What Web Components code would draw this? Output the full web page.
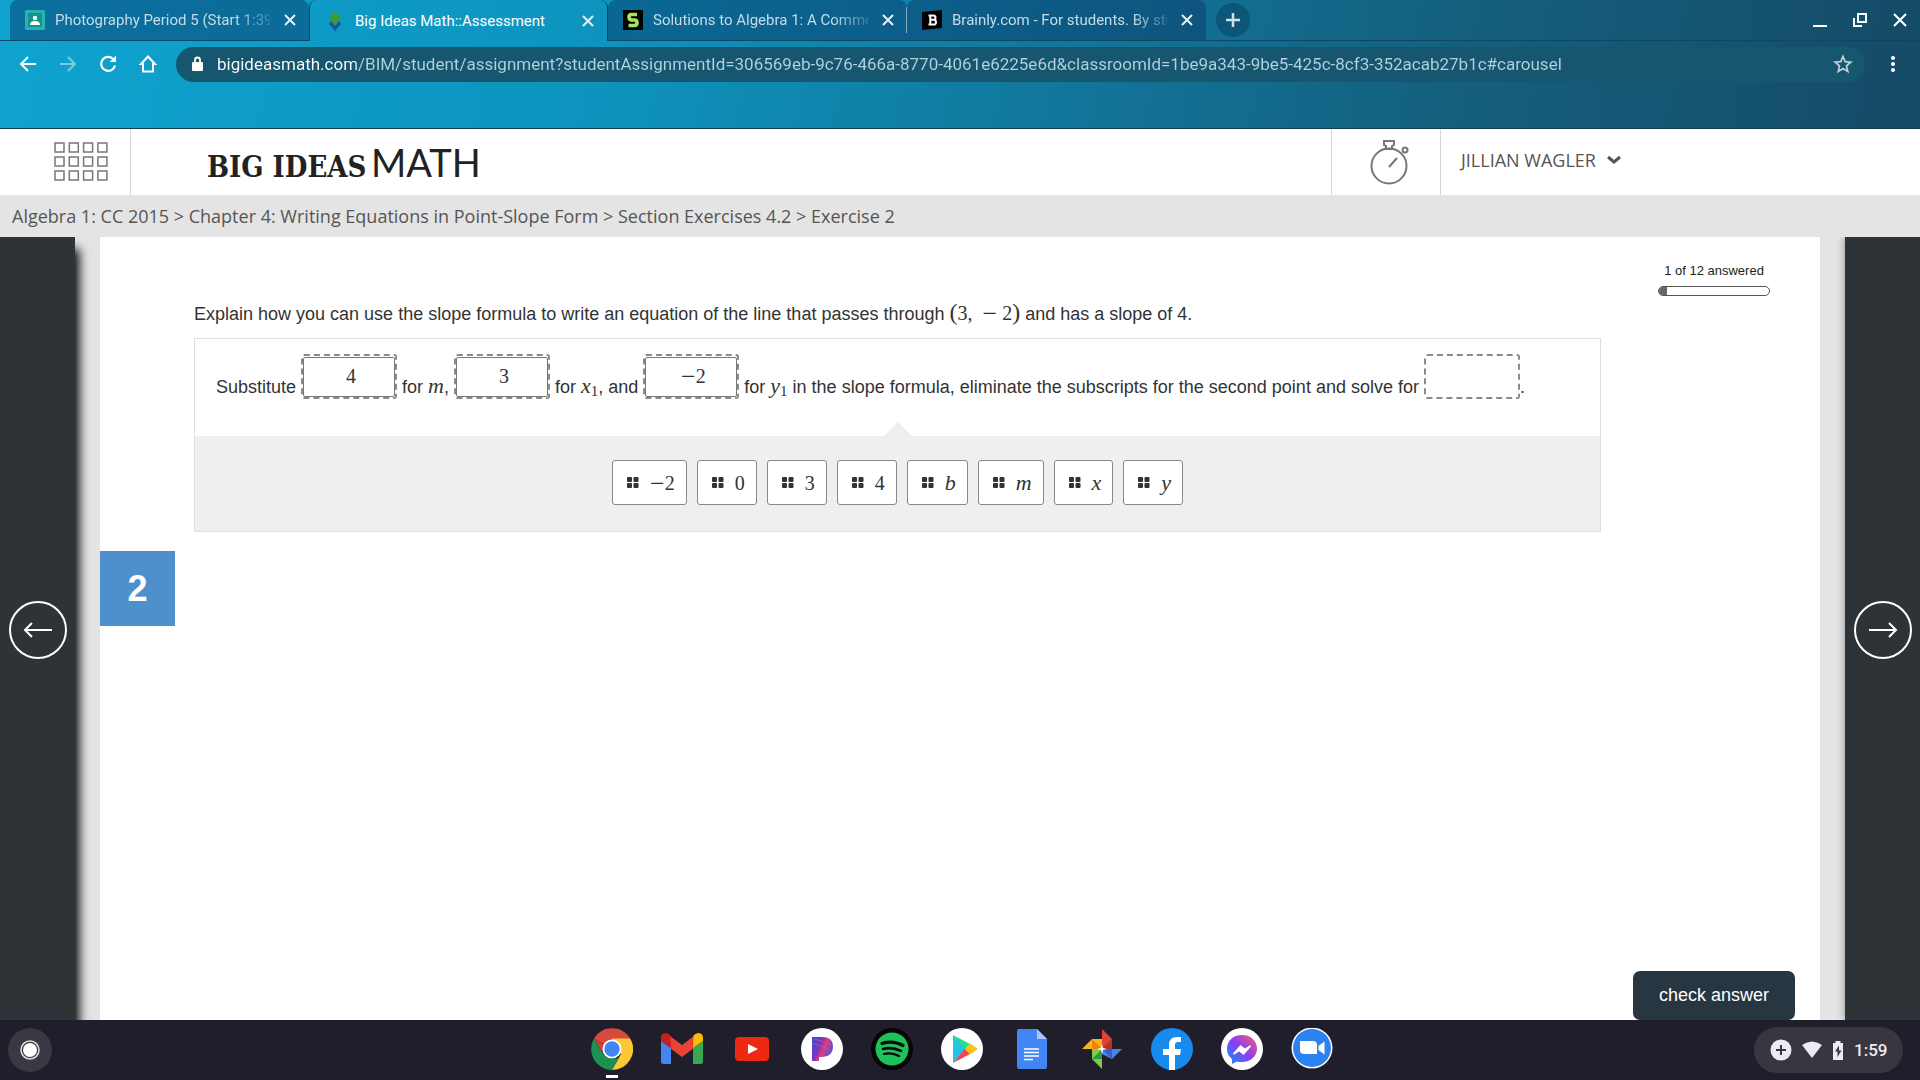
<!DOCTYPE html>
<html lang="en">
<head>
<meta charset="utf-8">
<title>Big Ideas Math::Assessment</title>
<style>
  * { box-sizing: border-box; }

  body {
    margin: 0;
    height: 100vh;
    display: flex;
    flex-direction: column;
    overflow: hidden;
    font-family: "Liberation Sans", Arial, sans-serif;
    color: #333;
    background: #e4e4e4;
  }
</style>
</head>
<body>
  <browser-frame>
    <browser-tab slot="tabs" faded label="Photography Period 5 (Start 1:39">
      <svg width="20" height="20" viewBox="0 0 20 20"><rect width="20" height="20" rx="1" fill="#25b5ae"/><rect x="3" y="3" width="14" height="14" fill="#12938d"/><circle cx="10" cy="8" r="2.2" fill="#fff"/><path d="M5 15q0-4 5-4t5 4z" fill="#fff"/></svg>
    </browser-tab>
    <browser-tab slot="tabs" active label="Big Ideas Math::Assessment">
      <svg width="20" height="20" viewBox="0 0 20 20"><path d="M10 5l6 8-6 7-6-7z" fill="#0f59a8"/><path d="M10 0l6 7-6 8-6-8z" fill="#3f9b35"/></svg>
    </browser-tab>
    <browser-tab slot="tabs" divided faded label="Solutions to Algebra 1: A Commo">
      <svg width="20" height="20" viewBox="0 0 20 20"><path fill="#000" d="M0 0h20v20H0z"/><path d="M14 4.500H8.500Q6 4.500 6 7t2.500 3h3Q14 10 14 12.700T11.500 15.500H5.500" fill="none" stroke="#a4e65a" stroke-width="3.600"/></svg>
    </browser-tab>
    <browser-tab slot="tabs" faded label="Brainly.com - For students. By stu">
      <svg width="20" height="20" viewBox="0 0 20 20"><path fill="#000" d="M0 2l20-2v18L0 20z"/><path d="M6.500 5.500h4.500q2.500 0 2.500 2.200T11 9.800H8.500h3q2.500 0 2.500 2.400t-2.500 2.400h-5M8.300 5.500v9" fill="none" stroke="#fff" stroke-width="2"/></svg>
    </browser-tab>
  </browser-frame>

  <app-header user="JILLIAN WAGLER"></app-header>
  <bread-crumb>Algebra 1: CC 2015 &gt; Chapter 4: Writing Equations in Point-Slope Form &gt; Section Exercises 4.2 &gt; Exercise 2</bread-crumb>

  <exercise-stage>
    <exercise-page number="2" total="12" answered="1">
      <span slot="prompt">Explain how you can use the slope formula to write an equation of the line that passes through <math-text><big>(</big>3, &nbsp;<b>−</b> 2<big>)</big></math-text> and has a slope of 4.</span>
      <span slot="work">Substitute <drop-slot><math-text>4</math-text></drop-slot> for <math-text><i>m</i></math-text>, <drop-slot><math-text>3</math-text></drop-slot> for <math-text><i>x</i><sub>1</sub></math-text>, and <drop-slot><math-text><b>−</b>2</math-text></drop-slot> for <math-text><i>y</i><sub>1</sub></math-text> in the slope formula, eliminate the subscripts for the second point and solve for <drop-slot empty></drop-slot>.</span>
      <drag-tile slot="tiles"><math-text><b>−</b>2</math-text></drag-tile>
      <drag-tile slot="tiles"><math-text>0</math-text></drag-tile>
      <drag-tile slot="tiles"><math-text>3</math-text></drag-tile>
      <drag-tile slot="tiles"><math-text>4</math-text></drag-tile>
      <drag-tile slot="tiles"><math-text><i>b</i></math-text></drag-tile>
      <drag-tile slot="tiles"><math-text><i>m</i></math-text></drag-tile>
      <drag-tile slot="tiles"><math-text><i>x</i></math-text></drag-tile>
      <drag-tile slot="tiles"><math-text><i>y</i></math-text></drag-tile>
    </exercise-page>
  </exercise-stage>

  <system-shelf time="1:59"></system-shelf>

<script>
const BASE = /* css */`
  * { box-sizing: border-box; }
  svg { display: block; flex: none; }
  button {
    margin: 0;
    padding: 0;
    border: 0;
    background: none;
    color: inherit;
    font: inherit;
    display: grid;
    place-items: center;
    cursor: pointer;
  }
`;

class BrowserFrame extends HTMLElement {
  constructor() {
    super();
    this.attachShadow({ mode: "open" });
  }

  static get styles() {
    return /* css */`
      ${BASE}
      :host {
        --line: #0c4663;
        display: block;
        font-family: Roboto, sans-serif;
        color: #fff;
        border-bottom: 1px solid #123c50;
        background: linear-gradient(100deg, #0fa3d0, #0d93bd 32%, #127397 58%, #14607f 75%, #154a66);
      }

      .strip {
        display: flex;
        height: 41px;
      }

      .lead { width: 10px; border-bottom: 1px solid var(--line); }

      .rest {
        flex: 1;
        display: flex;
        align-items: center;
        gap: 16px;
        padding: 0 8px 0 10px;
        border-bottom: 1px solid var(--line);
      }

      .add {
        width: 34px;
        height: 34px;
        border-radius: 50%;
        background: #0c5678;
        margin-right: auto;
      }

      .win { width: 24px; height: 34px; }

      .bar {
        display: flex;
        align-items: center;
        gap: 16px;
        height: 46px;
        padding: 0 15px 0 16px;
      }

      .bar button { width: 24px; height: 24px; }
      .off { opacity: .45; }

      .box {
        flex: 1;
        display: flex;
        align-items: center;
        height: 35px;
        border-radius: 18px;
        padding: 0 10px 0 15px;
        background: #17566f;
      }

      /* the host part of the address is brighter than its path */
      input {
        flex: 1;
        min-width: 0;
        margin: 0 0 0 12px;
        padding: 0;
        border: 0;
        outline: 0;
        font: 17px/24px Roboto, sans-serif;
        color: #b4d2de;
        background: linear-gradient(90deg, #fff 139px, #b4d2de 139px);
        -webkit-background-clip: text;
        background-clip: text;
        -webkit-text-fill-color: transparent;
      }

      .gap { height: 41px; }
    `;
  }

  connectedCallback() {
    this.render();
  }

  render() {
    this.shadowRoot.innerHTML = /* html */`
    <style>${BrowserFrame.styles}</style>
    <div class="strip">
      <div class="lead"></div>
      <slot name="tabs"></slot>
      <div class="rest">
        <button class="add" aria-label="New tab"><svg width="16" height="16" viewBox="0 0 16 16" stroke="#cfe0e8" stroke-width="2.500"><path d="M8 1v14M1 8h14"/></svg></button>
        <button class="win" aria-label="Minimize"><svg width="16" height="16" viewBox="0 0 16 16" stroke="#fff" stroke-width="2"><path d="M1 14h14"/></svg></button>
        <button class="win" aria-label="Restore"><svg width="16" height="16" viewBox="0 0 16 16" fill="none" stroke="#fff" stroke-width="2"><path d="M6 2h8v8H6zM2 6v8h8"/></svg></button>
        <button class="win" aria-label="Close"><svg width="16" height="16" viewBox="0 0 16 16" stroke="#fff" stroke-width="2"><path d="M2 2l12 12M14 2L2 14"/></svg></button>
      </div>
    </div>
    <div class="bar">
      <button aria-label="Back"><svg width="20" height="20" viewBox="0 0 20 20" fill="none" stroke="#fff" stroke-width="2"><path d="M18 10H3M10 3l-7 7 7 7"/></svg></button>
      <button class="off" aria-label="Forward"><svg width="20" height="20" viewBox="0 0 20 20" fill="none" stroke="#fff" stroke-width="2"><path d="M2 10h15M10 3l7 7-7 7"/></svg></button>
      <button aria-label="Reload"><svg width="20" height="20" viewBox="0 0 20 20" fill="none" stroke="#fff" stroke-width="2.200"><path d="M15.500 5.200A7 7 0 1 0 17 11.500"/><path d="M18 1.500v6.500h-6.500z" fill="#fff" stroke="none"/></svg></button>
      <button aria-label="Home"><svg width="20" height="20" viewBox="0 0 20 20" fill="none" stroke="#fff" stroke-width="2"><path d="M10 2.500l7 7.500h-2v7.500H5V10H3z"/></svg></button>
      <div class="box">
        <svg width="14" height="18" viewBox="0 0 14 18"><rect x="1" y="7" width="11" height="9" rx="1" fill="#fff"/><path d="M4 8V5a2.500 2.500 0 0 1 5 0v3" fill="none" stroke="#fff" stroke-width="1.800"/></svg>
        <input type="text" aria-label="Address" value="bigideasmath.com/BIM/student/assignment?studentAssignmentId=306569eb-9c76-466a-8770-4061e6225e6d&amp;classroomId=1be9a343-9be5-425c-8cf3-352acab27b1c#carousel">
        <button aria-label="Bookmark this page"><svg width="20" height="20" viewBox="0 0 20 20" fill="none" stroke="#c3d0d6" stroke-width="1.700"><path d="M10 2.500l2.200 5.200 5.600.5-4.300 3.700 1.300 5.500L10 14.500l-4.800 2.900 1.300-5.500-4.300-3.700 5.600-.5z"/></svg></button>
      </div>
      <button aria-label="Menu"><svg width="4" height="18" viewBox="0 0 4 18" fill="#fff"><circle cx="2" cy="3" r="2"/><circle cx="2" cy="9" r="2"/><circle cx="2" cy="15" r="2"/></svg></button>
    </div>
    <div class="gap"></div>`;
  }
}

class BrowserTab extends HTMLElement {
  constructor() {
    super();
    this.attachShadow({ mode: "open" });
  }

  static get styles() {
    return /* css */`
      ${BASE}
      :host {
        flex: 0 1 299px;
        min-width: 0;
        box-sizing: border-box;
        display: flex;
        align-items: center;
        gap: 10px;
        padding: 0 9px 0 15px;
        font-size: 15px;
        line-height: 24px;
        color: #c5dce6;
        border-bottom: 1px solid var(--line);
        border-radius: 8px 8px 0 0;
        background: rgb(8 60 108 / 50%);
      }

      :host([active]) {
        color: #fff;
        background: none;
        border: 1px solid var(--line);
        border-width: 0 1px;
      }

      /* short rule between two background tabs */
      :host([divided]) {
        background:
          linear-gradient(#7fa9bc, #7fa9bc) right 7px / 1px 26px no-repeat,
          rgb(8 60 108 / 50%);
      }

      .label {
        flex: 1;
        min-width: 0;
        white-space: nowrap;
      }

      :host([faded]) .label {
        -webkit-mask: linear-gradient(to left, #0003, #000 36px);
        mask: linear-gradient(to left, #0003, #000 36px);
      }

      button { width: 20px; height: 20px; }
    `;
  }

  connectedCallback() {
    this.render();
  }

  render() {
    this.shadowRoot.innerHTML = /* html */`
    <style>${BrowserTab.styles}</style>
    <slot></slot>
    <span class="label">${this.getAttribute("label")}</span>
    <button aria-label="Close tab"><svg width="12" height="12" viewBox="0 0 12 12" stroke="#e6f0f4" stroke-width="2"><path d="M1 1l10 10M11 1L1 11"/></svg></button>`;
  }
}

class AppHeader extends HTMLElement {
  constructor() {
    super();
    this.attachShadow({ mode: "open" });
  }

  static get styles() {
    return /* css */`
      ${BASE}
      :host {
        display: flex;
        height: 66px;
        background: #fff;
        color: #555;
      }

      .apps {
        width: 131px;
        padding-left: 31px;
        border-right: 1px solid #d6d6d6;
      }

      .logo {
        flex: 1;
        padding: 9px 0 0 76px;
        color: #222;
        line-height: 48px;
        white-space: nowrap;
      }

      .slab { font: bold 29px/48px "DejaVu Serif Condensed", "Liberation Serif", serif; }
      .light { font: 38px/48px Lato, sans-serif; }

      .timer {
        width: 110px;
        padding-left: 7px;
        border: 1px solid #d6d6d6;
        border-width: 0 1px;
      }

      .user {
        width: 479px;
        display: flex;
        align-items: center;
        justify-content: flex-start;
        gap: 10px;
        padding: 0 20px 4px;
        font: 18px/24px "Open Sans", sans-serif;
      }
    `;
  }

  connectedCallback() {
    this.render();
  }

  render() {
    let cells = "";
    for (let row = 0; row < 3; row++) {
      for (let col = 0; col < 4; col++) {
        cells += `<rect x="${1 + col * 14.3}" y="${1 + row * 14}" width="9" height="9"/>`;
      }
    }
    this.shadowRoot.innerHTML = /* html */`
    <style>${AppHeader.styles}</style>
    <button class="apps" aria-label="Menu"><svg width="54" height="40" viewBox="0 0 54 40" fill="none" stroke="#777" stroke-width="1.500">${cells}</svg></button>
    <div class="logo"><span class="slab">BIG IDEAS</span> <span class="light">MATH</span></div>
    <button class="timer" aria-label="Timer">
      <svg width="40" height="46" viewBox="0 0 40 46" fill="none" stroke="#777" stroke-width="2"><circle cx="19" cy="27" r="17.500"/><path d="M14 2h10v4l-2 1v3h-6V7l-2-1zM19 28l8-9"/><circle cx="35" cy="11" r="2.500"/></svg>
    </button>
    <button class="user">${this.getAttribute("user")}
      <svg width="16" height="10" viewBox="0 0 16 10" fill="none" stroke="#555" stroke-width="3"><path d="M2 2l6 5 6-5"/></svg>
    </button>`;
  }
}

class BreadCrumb extends HTMLElement {
  constructor() {
    super();
    this.attachShadow({ mode: "open" });
  }

  connectedCallback() {
    this.shadowRoot.innerHTML = /* html */`
    <style>
      :host {
        display: block;
        padding: 9px 12px;
        font: 18px/24px "Open Sans", sans-serif;
        color: #555;
        white-space: nowrap;
      }
    </style>
    <slot></slot>`;
  }
}

class ExerciseStage extends HTMLElement {
  constructor() {
    super();
    this.attachShadow({ mode: "open" });
  }

  static get styles() {
    return /* css */`
      ${BASE}
      :host {
        flex: 1;
        min-height: 0;
        display: flex;
        gap: 25px;
        overflow: hidden;
      }

      nav {
        width: 75px;
        flex: none;
        display: grid;
        place-items: center;
        padding: 2px 0 0 1px;
        background: #2d3337;
        box-shadow: 0 0 8px rgb(0 0 0 / 40%);
      }

      .prev { box-shadow: 4px 12px 10px #000; }
      ::slotted(*) { flex: 1; }
    `;
  }

  connectedCallback() {
    this.render();
  }

  arrow(path) {
    return `<svg width="60" height="60" viewBox="0 0 60 60" fill="none" stroke="#fff" stroke-width="2"><circle cx="30" cy="30" r="28"/><path d="${path}"/></svg>`;
  }

  render() {
    this.shadowRoot.innerHTML = /* html */`
    <style>${ExerciseStage.styles}</style>
    <nav class="prev"><button aria-label="Previous exercise">${this.arrow("M44 30H17M24 23l-7 7 7 7")}</button></nav>
    <slot></slot>
    <nav><button aria-label="Next exercise">${this.arrow("M16 30h27M36 23l7 7-7 7")}</button></nav>`;
  }
}

class ExercisePage extends HTMLElement {
  constructor() {
    super();
    this.attachShadow({ mode: "open" });
  }

  static get styles() {
    return /* css */`
      ${BASE}
      :host {
        display: grid;
        grid-template-columns: 75px 1fr 200px;
        column-gap: 19px;
        background: #fff;
        font-size: 18px;
        line-height: 30px;
      }

      .number {
        height: 75px;
        margin-top: 314px;
        display: grid;
        place-items: center;
        background: #4e90cc;
        color: #fff;
        font-size: 36px;
        font-weight: bold;
      }

      .body { padding-top: 62px; }
      .prompt { white-space: nowrap; }

      .card {
        margin-top: 9px;
        border: 1px solid #e0e0e0;
      }

      .work {
        padding: 15px 21px 0;
        height: 97px;
        white-space: nowrap;
      }

      .bank {
        position: relative;
        display: flex;
        justify-content: center;
        gap: 10px;
        padding: 24px 0 26px;
        background: #efefef;
      }

      .bank::before {
        content: "";
        position: absolute;
        bottom: 100%;
        left: 50%;
        border: 14px solid transparent;
        border-top: 0;
        border-bottom-color: #efefef;
        transform: translate(-50%, 0);
      }

      .side {
        display: flex;
        flex-direction: column;
        justify-content: space-between;
        padding-right: 25px;
      }

      .progress {
        align-self: flex-end;
        width: 112px;
        margin: 24px 25px 0 0;
        font-size: 13px;
        line-height: 20px;
        text-align: center;
        color: #222;
      }

      .track {
        height: 10px;
        margin-top: 5px;
        border: 1px solid #555;
        border-radius: 5px;
        overflow: hidden;
      }

      .fill {
        height: 100%;
        width: calc(100% / 14);
        background: #666;
      }

      .check {
        align-self: flex-end;
        width: 162px;
        height: 49px;
        padding-bottom: 2px;
        border-radius: 7px;
        background: #283642;
        color: #fff;
        font-size: 18px;
      }
    `;
  }

  connectedCallback() {
    this.render();
  }

  render() {
    const answered = this.getAttribute("answered");
    const total = this.getAttribute("total");
    this.shadowRoot.innerHTML = /* html */`
    <style>${ExercisePage.styles}</style>
    <div class="number">${this.getAttribute("number")}</div>
    <div class="body">
      <div class="prompt"><slot name="prompt"></slot></div>
      <div class="card">
        <div class="work"><slot name="work"></slot></div>
        <div class="bank"><slot name="tiles"></slot></div>
      </div>
    </div>
    <div class="side">
      <div class="progress">${answered} of ${total} answered
        <div class="track"><div class="fill"></div></div>
      </div>
      <button class="check">check answer</button>
    </div>`;
  }
}

class MathText extends HTMLElement {
  constructor() {
    super();
    this.attachShadow({ mode: "open" });
  }

  connectedCallback() {
    this.shadowRoot.innerHTML = /* html */`
    <style>
      :host {
        font-family: "Liberation Serif", serif;
        font-size: 20px;
        line-height: 20px;
      }
      ::slotted(i) { font-size: 22px; }
      ::slotted(b) { font-size: 26px; font-weight: normal; line-height: 0; vertical-align: -2px; }
      ::slotted(big) { font-size: 24px; }
      ::slotted(sub) { font-size: 15px; line-height: 0; vertical-align: -3px; }
    </style>
    <slot></slot>`;
  }
}

class DropSlot extends HTMLElement {
  constructor() {
    super();
    this.attachShadow({ mode: "open" });
  }

  connectedCallback() {
    this.shadowRoot.innerHTML = /* html */`
    <style>
      /* overflow keeps the box sitting on its bottom edge, filled or empty */
      :host {
        display: inline-block;
        box-sizing: border-box;
        width: 96px;
        height: 45px;
        padding: 1px 0 0;
        overflow: hidden;
        vertical-align: -6px;
        border: 2px dashed #8a8a8a;
        border-radius: 3px;
        text-align: center;
      }
      div {
        height: 40px;
        line-height: 38px;
        box-sizing: border-box;
        border: 1px solid #777;
        border-radius: 2px;
        padding-left: 4px;
      }
      :host([empty]) div { visibility: hidden; }
    </style>
    <div><slot></slot></div>`;
  }
}

class DragTile extends HTMLElement {
  constructor() {
    super();
    this.attachShadow({ mode: "open" });
  }

  connectedCallback() {
    this.shadowRoot.innerHTML = /* html */`
    <style>
      :host { display: block; }
      button {
        display: flex;
        align-items: center;
        gap: 11px;
        height: 45px;
        margin: 0;
        padding: 0 11px 0 14px;
        border: 1px solid #888;
        border-radius: 3px;
        background: #fff;
        color: #333;
        cursor: grab;
      }
    </style>
    <button><svg width="12" height="11" viewBox="0 0 12 11" fill="#333"><rect width="5" height="5" rx="1"/><rect x="6.500" width="5" height="5" rx="1"/><rect y="6" width="5" height="5" rx="1"/><rect x="6.500" y="6" width="5" height="5" rx="1"/></svg><slot></slot></button>`;
  }
}

const SHELF_APPS = {
  Chrome: `<path d="M21 21L3 10.500A21 21 0 0 1 39.200 10.500z" fill="#d64b3e"/><path d="M21 10.500h18.200A21 21 0 0 1 21 42l9-16z" fill="#fcc934"/><path d="M3 10.500L12 26l9 5 7-1-7 12A21 21 0 0 1 3 10.500z" fill="#1c9150"/><path d="M3 10.500l9 15 9-4z" fill="#cf4236"/><circle cx="21" cy="21" r="9.500" fill="#fff"/><circle cx="21" cy="21" r="7.700" fill="#4285f4"/>`,
  Gmail: `<path d="M0 13l10 7v16H2.500Q0 36 0 33.500z" fill="#4285f4"/><path d="M32 20l10-7v20.500q0 2.500-2.500 2.500H32z" fill="#34a853"/><path d="M9 8l12 9 12-9v12l-12 9-12-9z" fill="#ea4335"/><path d="M0 13V10q0-5 5-5 2 0 4.500 2.500L10 20z" fill="#c5221f"/><path d="M42 13V10q0-5-5-5-2 0-4.500 2.500L32 20z" fill="#fbbc04"/>`,
  YouTube: `<rect x="4" y="9" width="34" height="24" rx="4" fill="#ed2912"/><path d="M17 16l10 5-10 5z" fill="#fff"/>`,
  Pandora: `<defs><linearGradient id="pa" x2="1" y2=".5"><stop stop-color="#314ce5"/><stop offset=".45" stop-color="#7a35bd"/><stop offset=".65" stop-color="#e23e79"/><stop offset="1" stop-color="#3f56e9"/></linearGradient></defs><circle cx="21" cy="21" r="21" fill="#fff"/><path d="M11 9h10q11 0 11 9 0 11-12 11h-2v4h-7z" fill="url(#pa)"/><path d="M13 11q8 1 17 6M11 16q9 0 19 7" fill="none" stroke="#e04b83" opacity=".7"/>`,
  Spotify: `<circle cx="21" cy="21" r="21" fill="#050505"/><circle cx="21" cy="21" r="16.500" fill="#1fc15a"/><g fill="none" stroke="#0a0a0a" stroke-linecap="round"><path d="M11 15.500q11-3.500 21 2" stroke-width="3.200"/><path d="M12 21q9-2.500 18 2" stroke-width="2.600"/><path d="M13 26q8-2 15 2" stroke-width="2.200"/></g>`,
  "Play Store": `<circle cx="21" cy="21" r="21" fill="#fff"/><path d="M12 7l13 13.500L12 35z" fill="#20c5e8"/><path d="M12 7l17 9-5 5z" fill="#28dd8b"/><path d="M12 35l17-9-5-5.500z" fill="#ef4655"/><path d="M29 15.500L37 21l-8 5.500-5-5.500z" fill="#fcc21b"/>`,
  Docs: `<path d="M8 1h18l10 10v28q0 2-2 2H8q-2 0-2-2V3q0-2 2-2z" fill="#4285f4"/><path d="M26 1l10 10H26z" fill="#a8c5fa"/><path d="M13 21h15M13 24.500h15M13 28h15M13 31.500h9" stroke="#fff" stroke-width="1.700"/>`,
  Photos: `<path d="M21 1l10 10v10H21z" fill="#db4437"/><path d="M21 21h10V11z" fill="#b8302b"/><path d="M41 21L31 31l-10-5v-5z" fill="#4a84ee"/><path d="M21 21h10v10z" fill="#2f62c4"/><path d="M21 41L11 31V21h10z" fill="#8bc83f"/><path d="M21 21v10H11z" fill="#259b4d"/><path d="M1 21L11 11h10v10z" fill="#fcb316"/><path d="M21 21H11V11z" fill="#ea8215"/><path d="M21 16l1 4 4 1-4 1-1 4-1-4-4-1 4-1z" fill="#fff"/>`,
  Facebook: `<circle cx="21" cy="21" r="21" fill="#168bed"/><path d="M18 42V27h-6v-6h6v-4q0-8 8-8h4v5h-3q-3 0-3 3v4h6l-1 6h-5v15z" fill="#fff"/>`,
  Messenger: `<defs><linearGradient id="me" x1="1" x2="0" y2="1"><stop stop-color="#f75c76"/><stop offset=".5" stop-color="#8c3df2"/><stop offset="1" stop-color="#0794ff"/></linearGradient></defs><circle cx="21" cy="21" r="21" fill="#fff"/><path d="M21 7C12 7 6 13 6 21q0 6 5 10v5l5-2.500q2 .5 5 .5c9 0 15-6 15-13.500S30 7 21 7z" fill="url(#me)"/><path d="M12.500 26l7-8 4.500 3.500 5.500-3.500-7 8-4.500-3.500z" fill="#fff" stroke="#fff" stroke-width="1.500"/>`,
  Zoom: `<circle cx="21" cy="20" r="20.500" fill="#fff"/><circle cx="21" cy="20" r="19" fill="#2c83f0"/><path d="M9 13h13q4 0 4 4v9H13q-4 0-4-4zM27.500 18l6-4.500v13l-6-4.500z" fill="#fff"/>`
};

class SystemShelf extends HTMLElement {
  constructor() {
    super();
    this.attachShadow({ mode: "open" });
  }

  static get styles() {
    return /* css */`
      ${BASE}
      :host {
        display: grid;
        grid-template-columns: 1fr auto 1fr;
        align-items: center;
        height: 60px;
        padding: 0 17px 0 8px;
        background: #201e2a;
        color: #eceaf2;
      }

      .apps { display: flex; gap: 28px; padding-left: 13px; }

      .apps button {
        height: 60px;
        width: 42px;
        padding-bottom: 2px;
      }

      .apps .open {
        background: linear-gradient(#fff, #fff) 50% 55px / 12px 3px no-repeat;
      }

      .launcher {
        width: 44px;
        height: 44px;
        border-radius: 50%;
        background: #3a3843;
      }

      .tray {
        justify-self: end;
        display: flex;
        align-items: center;
        gap: 10px;
        width: 149px;
        height: 46px;
        padding: 0 16px;
        border-radius: 23px;
        background: #383641;
        font: 500 17px/24px Roboto, sans-serif;
      }
    `;
  }

  connectedCallback() {
    this.render();
  }

  render() {
    const apps = Object.entries(SHELF_APPS).map(([name, art], i) =>
      `<button aria-label="${name}"${i ? "" : ' class="open"'}><svg width="42" height="42" viewBox="0 0 42 42">${art}</svg></button>`).join("");
    this.shadowRoot.innerHTML = /* html */`
    <style>${SystemShelf.styles}</style>
    <button class="launcher" aria-label="Launcher"><svg width="20" height="20" viewBox="0 0 20 20"><circle cx="10" cy="10" r="9" fill="none" stroke="#dcdbe0" stroke-width="1.500"/><circle cx="10" cy="10" r="7" fill="#fff"/></svg></button>
    <div class="apps">${apps}</div>
    <button class="tray">
      <svg width="22" height="22" viewBox="0 0 22 22"><circle cx="11" cy="11" r="10.500" fill="#eceaf2"/><path d="M11 6v10M6 11h10" stroke="#383641" stroke-width="2"/></svg>
      <svg width="20" height="18" viewBox="0 0 20 18"><path d="M0 4q10-7 20 0L10 17z" fill="#eceaf2"/></svg>
      <svg width="12" height="19" viewBox="0 0 12 19"><path d="M3.500 0h5v2H11v17H1V2h2.500z" fill="#eceaf2"/><path d="M7 4.500l-4 6h2.500V16l4-6.500H7z" fill="#383641"/></svg>
      <span>${this.getAttribute("time")}</span>
    </button>`;
  }
}

customElements.define("browser-frame", BrowserFrame);
customElements.define("browser-tab", BrowserTab);
customElements.define("app-header", AppHeader);
customElements.define("bread-crumb", BreadCrumb);
customElements.define("exercise-stage", ExerciseStage);
customElements.define("exercise-page", ExercisePage);
customElements.define("math-text", MathText);
customElements.define("drop-slot", DropSlot);
customElements.define("drag-tile", DragTile);
customElements.define("system-shelf", SystemShelf);
</script>
</body>
</html>
